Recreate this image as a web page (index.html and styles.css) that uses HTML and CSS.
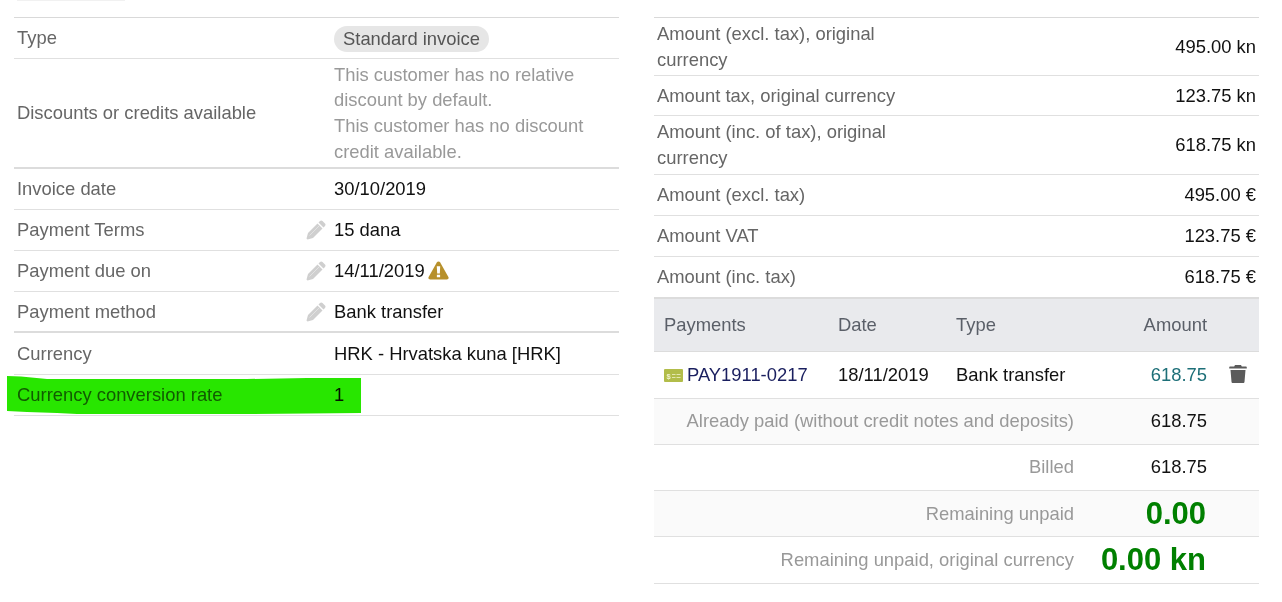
FILE: index.html
```html
<!DOCTYPE html>
<html lang="en">
<head>
<meta charset="utf-8">
<title>Invoice</title>
<link rel="stylesheet" href="styles.css">
</head>
<body>
<svg class="defs" width="0" height="0" aria-hidden="true">
  <symbol id="pencil" viewBox="0 0 20 20">
    <path d="M14 1c.8-.7 1.800-.7 2.500 0l2.500 2.500c.7.700.7 1.700 0 2.500l-1.500 1.500-5-5Z" fill="#cfcfcf"/>
    <path d="M11.500 3.500 16.500 8.500 7 18 1.500 19.500.500 18.500 2 13Z" fill="#cfcfcf"/>
    <path d="M3.500 15.500 13 6" stroke="#e2e2e2" stroke-width="1"/>
  </symbol>
</svg>
<main class="page">
  <section class="col left">
    <div class="top-mark"></div>
    <div class="row h41"><div class="k">Type</div><div class="v"><span class="badge">Standard invoice</span></div></div>
    <div class="row multi thick"><div class="k">Discounts or credits available</div><div class="v muted">This customer has no relative<br>discount by default.<br>This customer has no discount<br>credit available.</div></div>
    <div class="row h41"><div class="k">Invoice date</div><div class="v">30/10/2019</div></div>
    <div class="row h41"><div class="k">Payment Terms<svg class="pen"><use href="#pencil"/></svg></div><div class="v">15 dana</div></div>
    <div class="row h41"><div class="k">Payment due on<svg class="pen"><use href="#pencil"/></svg></div><div class="v">14/11/2019
      <svg class="warn" viewBox="0 0 22 20"><path d="M11 0.500c.8 0 1.400.4 1.800 1.100l8.600 15.200c.7 1.300-.2 2.700-1.700 2.700H2.300C.8 19.500-.1 18.100.6 16.800L9.200 1.600C9.600.9 10.200.5 11 .5Z" fill="#b7902b"/><path d="M9.200 5.500h3.600l-.4 7.600H9.600Z M9.300 14.400h3.400v2.800H9.300Z" fill="#fff"/></svg></div></div>
    <div class="row h41 thick"><div class="k">Payment method<svg class="pen"><use href="#pencil"/></svg></div><div class="v">Bank transfer</div></div>
    <div class="row h42"><div class="k">Currency</div><div class="v">HRK - Hrvatska kuna [HRK]</div></div>
    <div class="row h41"><div class="k">Currency conversion rate</div><div class="v">1</div></div>
    <div class="marker"></div>
  </section>

  <section class="col right">
    <div class="row h58"><div class="k wrap">Amount (excl. tax), original currency</div><div class="amt">495.00 kn</div></div>
    <div class="row h40"><div class="k">Amount tax, original currency</div><div class="amt">123.75 kn</div></div>
    <div class="row h59"><div class="k wrap">Amount (inc. of tax), original currency</div><div class="amt">618.75 kn</div></div>
    <div class="row h41"><div class="k">Amount (excl. tax)</div><div class="amt">495.00 €</div></div>
    <div class="row h41"><div class="k">Amount VAT</div><div class="amt">123.75 €</div></div>
    <div class="row h42 thick"><div class="k">Amount (inc. tax)</div><div class="amt">618.75 €</div></div>

    <div class="pay head"><div class="c1">Payments</div><div class="c2">Date</div><div class="c3">Type</div><div class="c4">Amount</div></div>
    <div class="pay line">
      <div class="c1"><svg class="money" viewBox="0 0 19 13"><rect width="19" height="13" rx="1" fill="#b2bd4a"/><text x="2.500" y="9.500" class="dollar">$</text><path d="M8 5.500h3.500M12.500 5.500h4M8 8.500h3.500M12.500 8.500h4" stroke="#e4e8b0" stroke-width="1.200"/></svg><span class="ref">PAY1911-0217</span></div>
      <div class="c2">18/11/2019</div><div class="c3">Bank transfer</div><div class="c4 teal">618.75</div>
      <div class="c5"><svg class="trash" viewBox="0 0 18 18"><path d="M6 0h6l.8 1.600H17c.5 0 .8.300.8.800v1.200H.2V2.400c0-.5.300-.8.800-.8h4.200Z M1.500 5h15l-1 11.700c0 .7-.6 1.300-1.300 1.300H3.800c-.7 0-1.300-.6-1.300-1.300Z" fill="#5b5b5b"/></svg></div>
    </div>
    <div class="sum alt h46 lift"><div class="lbl">Already paid (without credit notes and deposits)</div><div class="val">618.75</div></div>
    <div class="sum h46 lift"><div class="lbl">Billed</div><div class="val">618.75</div></div>
    <div class="sum alt h46"><div class="lbl">Remaining unpaid</div><div class="val big">0.00</div></div>
    <div class="sum h47"><div class="lbl">Remaining unpaid, original currency</div><div class="val big">0.00 kn</div></div>
  </section>
</main>
</body>
</html>
```

FILE: styles.css
```css
* { box-sizing: border-box; }
html, body { margin: 0; height: 100%; background: #fff; overflow: hidden; }
body {
  font-family: "Liberation Sans", Arial, sans-serif;
  font-size: 18.4px;
  color: #111;
}
.defs { position: absolute; }
.page {
  display: flex;
  gap: 35px;
  padding: 17px 23px 0 14px;
  width: 1282px;
}
.col {
  width: 605px;
  position: relative;
  border-top: 1px solid #d9d9d9;
}
.row {
  display: flex;
  align-items: center;
  border-bottom: 1px solid #e0e0e0;
}
.row.thick { border-bottom: 2px solid #dcdcdc; }
.h40 { height: 40px; }
.h41 { height: 41px; }
.h42 { height: 42px; }
.h46 { height: 46px; }
.h47 { height: 47px; }
.h58 { height: 58px; }
.h59 { height: 59px; }
.multi { height: 110px; }
.k {
  color: #666;
  padding-left: 3px;
  display: flex;
  align-items: center;
  justify-content: space-between;
}
.left .k { width: 320px; padding-right: 8px; flex: none; }
.v { line-height: 25.6px; display: flex; align-items: center; gap: 3px; flex-wrap: wrap; }
.v.muted { display: block; color: #999; }
.badge {
  background: #e6e6e6;
  color: #555;
  border-radius: 13px;
  padding: 0 9px;
  line-height: 26px;
  height: 26px;
  display: inline-block;
  margin-top: 1px;
}
.pen { width: 20px; height: 20px; flex: none; margin: 0; }
.warn { width: 21px; height: 19px; flex: none; margin-top: -2px; }
.top-mark {
  position: absolute;
  left: 3px;
  top: -18px;
  width: 108px;
  height: 1px;
  background: #f1f1f1;
}
.marker {
  position: absolute;
  left: -7px;
  top: 358px;
  width: 354px;
  height: 38px;
  background: #28e600;
  mix-blend-mode: multiply;
  clip-path: polygon(0 0, 14px 0.5px, 40px 3px, 120px 3px, 240px 3px, 300px 2px, 354px 2px, 354px 37px, 240px 38px, 70px 38px, 50px 37px, 20px 36px, 0 35px);
}
.right .k.wrap { display: block; width: 270px; line-height: 25.6px; }
.amt { margin-left: auto; padding-right: 3px; }
.pay {
  display: grid;
  grid-template-columns: 174px 118px 122px 147px 44px;
  align-items: center;
}
.pay.head {
  height: 53px;
  background: #e9eaed;
  color: #5a5f68;
  border-bottom: 1px solid #dcdcdc;
}
.pay.line { height: 47px; border-bottom: 1px solid #e0e0e0; }
.c1 { padding-left: 10px; display: flex; align-items: center; gap: 4px; }
.c2 { padding-left: 10px; }
.c3 { padding-left: 10px; }
.c4 { text-align: right; padding-right: 8px; }
.c5 { display: flex; justify-content: center; padding-left: 2px; padding-bottom: 2px; }
.teal { color: #1d6f78; }
.ref { color: #1a1f5f; }
.money { width: 19px; height: 13px; flex: none; }
.dollar { font-size: 7.500px; font-weight: 700; fill: #f2f4d0; font-family: "Liberation Sans", sans-serif; }
.trash { width: 18px; height: 18px; }
.sum {
  display: flex;
  align-items: center;
  border-bottom: 1px solid #e0e0e0;
}
.sum.lift { padding-bottom: 2px; }
.sum.alt { background: #fafafa; }
.lbl { width: 420px; text-align: right; color: #999; }
.val { width: 133px; text-align: right; }
.val.big { font-weight: 700; font-size: 31px; color: #008000; padding-right: 1px; }
```
